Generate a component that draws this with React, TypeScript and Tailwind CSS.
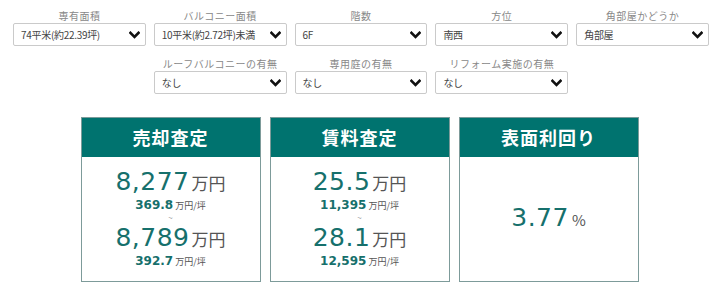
import React from "react";

const jp = { fontFamily: '"Noto Sans CJK JP", "Noto Sans", sans-serif' };
const num = { fontFamily: '"DejaVu Sans", "Noto Sans CJK JP", sans-serif' };

type Field = { label: string; value: string; col?: string };

const row1: Field[] = [
  { label: "専有面積", value: "74平米(約22.39坪)" },
  { label: "バルコニー面積", value: "10平米(約2.72坪)未満" },
  { label: "階数", value: "6F" },
  { label: "方位", value: "南西" },
  { label: "角部屋かどうか", value: "角部屋" },
];

const row2: Field[] = [
  { label: "ルーフバルコニーの有無", value: "なし", col: "col-start-2" },
  { label: "専用庭の有無", value: "なし" },
  { label: "リフォーム実施の有無", value: "なし" },
];

function Chevron() {
  return (
    <svg width="11" height="8" viewBox="0 0 11 8" className="shrink-0">
      <polyline points="1.5,1.8 5.5,5.8 9.5,1.8" fill="none" stroke="#111" strokeWidth="2.6" strokeLinecap="square" />
    </svg>
  );
}

function SelectField({ label, value, col }: Field) {
  return (
    <div className={`flex flex-col ${col ?? ""}`}>
      <div className="h-[15px] leading-[15px] text-center text-[10px] text-[#888] tracking-[0.5px]">{label}</div>
      <div className="h-[23px] border border-[#cacaca] rounded-[2px] bg-white flex items-center justify-between pl-[7px] pr-[5px]">
        <span className="text-[10px] text-[#444] tracking-[-0.3px]">{value}</span>
        <Chevron />
      </div>
    </div>
  );
}

function Card({ title, children, center }: { title: string; children: React.ReactNode; center?: boolean }) {
  return (
    <div className="w-[180px] h-[165px] border border-[#7d9b9a] flex flex-col">
      <div className="h-[39px] bg-[#00736f] flex items-center justify-center text-white text-[18px] font-bold tracking-[1px]">
        {title}
      </div>
      <div className={`flex-1 flex flex-col items-center ${center ? "justify-center" : "pt-[10px]"}`}>{children}</div>
    </div>
  );
}

function Big({ value, unit }: { value: string; unit: string }) {
  return (
    <div className="h-[30px] leading-[30px] flex items-baseline">
      <span style={num} className="text-[25px] text-[#16706c] tracking-[0.5px]">{value}</span>
      <span className="text-[17px] text-[#555] ml-[2px]">{unit}</span>
    </div>
  );
}

function Sub({ value }: { value: string }) {
  return (
    <div className="h-[16px] leading-[16px] flex items-baseline">
      <span style={num} className="text-[12px] font-bold text-[#16706c]">{value}</span>
      <span className="text-[9px] text-[#555] ml-[2px]">万円/坪</span>
    </div>
  );
}

function Tilde() {
  return <div className="h-[10px] leading-[10px] text-[8px] text-[#999]">~</div>;
}

export default function App() {
  return (
    <div style={jp} className="w-[719px] h-[286px] bg-white overflow-hidden">
      <div className="pl-[13px] pr-[10px] pt-[8px]">
        <div className="grid grid-cols-5 gap-x-[8px]">
          {row1.map((f) => (
            <SelectField key={f.label} {...f} />
          ))}
        </div>
        <div className="grid grid-cols-5 gap-x-[8px] mt-[10px]">
          {row2.map((f) => (
            <SelectField key={f.label} {...f} />
          ))}
        </div>
      </div>
      <div className="flex justify-center gap-[9px] mt-[23px]">
        <Card title="売却査定">
          <Big value="8,277" unit="万円" />
          <Sub value="369.8" />
          <Tilde />
          <Big value="8,789" unit="万円" />
          <Sub value="392.7" />
        </Card>
        <Card title="賃料査定">
          <Big value="25.5" unit="万円" />
          <Sub value="11,395" />
          <Tilde />
          <Big value="28.1" unit="万円" />
          <Sub value="12,595" />
        </Card>
        <Card title="表面利回り" center>
          <div className="flex items-baseline -mt-[2px]">
            <span style={num} className="text-[25px] text-[#16706c] tracking-[0.5px]">3.77</span>
            <span className="text-[15px] text-[#555] ml-[3px]">%</span>
          </div>
        </Card>
      </div>
    </div>
  );
}
